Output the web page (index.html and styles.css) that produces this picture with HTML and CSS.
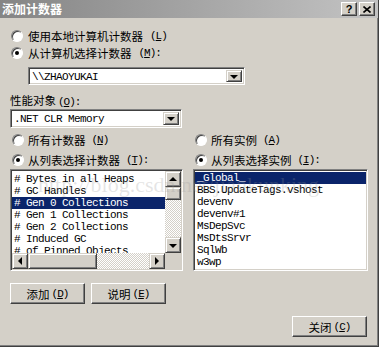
FILE: index.html
```html
<!DOCTYPE html>
<html lang="zh-CN">
<head>
    <meta charset="UTF-8">
    <meta name="viewport" content="width=device-width, initial-scale=1.0">
    <title>添加计数器</title>
    <link rel="stylesheet" href="styles.css">
</head>
<body>
    <div class="window">
        <div class="titlebar">
            <span class="title">添加计数器</span>
            <div class="caption-buttons">
                <span class="cap-btn">?</span>
                <span class="cap-btn">
                    <svg width="8" height="7" viewBox="0 0 8 7"><path d="M0.5 0.5 L7.5 6.5 M7.5 0.5 L0.5 6.5" stroke="#000" stroke-width="1.6"/></svg>
                </span>
            </div>
        </div>

        <div class="content">
            <div class="radio-row top"><span class="radio"></span>使用本地计算机计数器<span class="key">(<u>L</u>)</span></div>
            <div class="radio-row top"><span class="radio checked"></span>从计算机选择计数器<span class="key">(<u>M</u>):</span></div>
            <div class="combo machine">
                <span class="combo-text">\\ZHAOYUKAI</span>
                <span class="combo-btn"><i class="tri-down"></i></span>
            </div>

            <div class="label">性能对象<span class="key">(<u>O</u>):</span></div>
            <div class="combo object">
                <span class="combo-text">.NET CLR Memory</span>
                <span class="combo-btn"><i class="tri-down"></i></span>
            </div>

            <div class="columns">
                <div class="col">
                    <div class="radio-row"><span class="radio"></span>所有计数器<span class="key">(<u>N</u>)</span></div>
                    <div class="radio-row second"><span class="radio checked"></span>从列表选择计数器<span class="key">(<u>T</u>):</span></div>
                    <div class="listbox scrolled">
                        <div class="items">
                            <div class="item"># Bytes in all Heaps</div>
                            <div class="item"># GC Handles</div>
                            <div class="item selected"># Gen 0 Collections</div>
                            <div class="item"># Gen 1 Collections</div>
                            <div class="item"># Gen 2 Collections</div>
                            <div class="item"># Induced GC</div>
                            <div class="item"># of Pinned Objects</div>
                        </div>
                        <div class="vscroll">
                            <span class="sb-btn"><i class="tri-up"></i></span>
                            <span class="thumb v"></span>
                            <span class="track"></span>
                            <span class="sb-btn"><i class="tri-down"></i></span>
                        </div>
                        <div class="hscroll">
                            <span class="sb-btn"><i class="tri-left"></i></span>
                            <span class="thumb h"></span>
                            <span class="track"></span>
                            <span class="sb-btn"><i class="tri-right"></i></span>
                        </div>
                        <div class="corner"></div>
                    </div>
                </div>

                <div class="col">
                    <div class="radio-row"><span class="radio"></span>所有实例<span class="key">(<u>A</u>)</span></div>
                    <div class="radio-row second"><span class="radio checked"></span>从列表选择实例<span class="key">(<u>I</u>):</span></div>
                    <div class="listbox">
                        <div class="items instances">
                            <div class="item selected">_Global_</div>
                            <div class="item">BBS.UpdateTags.vshost</div>
                            <div class="item">devenv</div>
                            <div class="item">devenv#1</div>
                            <div class="item">MsDepSvc</div>
                            <div class="item">MsDtsSrvr</div>
                            <div class="item">SqlWb</div>
                            <div class="item">w3wp</div>
                        </div>
                    </div>
                </div>
            </div>

            <div class="buttons">
                <span class="btn">添加<span class="key">(<u>D</u>)</span></span>
                <span class="btn">说明<span class="key">(<u>E</u>)</span></span>
            </div>
            <div class="footer">
                <span class="btn">关闭<span class="key">(<u>C</u>)</span></span>
            </div>
        </div>

        <div class="watermark">http://blog.csdn.net/jiankunking</div>
    </div>
    <div class="behind"></div>
</body>
</html>
```

FILE: styles.css
```css
* {
    box-sizing: border-box;
}
body {
    margin: 0;
    width: 380px;
    height: 350px;
    overflow: hidden;
    background-color: #fff;
    font-family: "Noto Sans CJK SC", sans-serif;
    font-size: 11.5px;
    color: #000;
}
u {
    text-decoration-thickness: 1px;
    text-underline-offset: 1px;
}
.key {
    font-family: "Liberation Mono", monospace;
    font-size: 11px;
    letter-spacing: -1px;
    margin-left: 2px;
}
.window {
    position: relative;
    width: 379px;
    height: 347px;
    background-color: #d4d0c8;
    border-right: 1px solid #404040;
    border-bottom: 1px solid #404040;
    box-shadow: inset -1px -1px #808080;
}

/* title bar */
.titlebar {
    height: 18px;
    display: flex;
    align-items: center;
    justify-content: space-between;
    padding: 0 3px 0 2px;
    background: linear-gradient(to right, #858585, #c3c3c3);
}
.title {
    color: #fff;
    font-weight: bold;
    font-size: 12px;
    line-height: 18px;
}
.caption-buttons {
    display: flex;
    gap: 2px;
}
.cap-btn {
    width: 16px;
    height: 14px;
    display: flex;
    align-items: center;
    justify-content: center;
    background-color: #d4d0c8;
    border: 1px solid;
    border-color: #fff #404040 #404040 #fff;
    box-shadow: inset -1px -1px #808080;
    font: bold 11px "Liberation Sans", sans-serif;
}

/* main area */
.content {
    padding: 9px 11px 0 10px;
}
.radio-row {
    display: flex;
    align-items: center;
    height: 17px;
    gap: 4px;
    white-space: nowrap;
}
.radio-row.top {
    gap: 5px;
}
.radio-row.second {
    margin-top: 4px;
    height: 16px;
}
.radio {
    position: relative;
    flex: none;
    width: 12px;
    height: 12px;
    margin-left: 2px;
    border-radius: 50%;
    background-color: #fff;
    border: 1px solid;
    border-color: #808080 #fff #fff #808080;
    box-shadow: inset 1px 1px #404040;
}
.radio-row.top .radio {
    margin-left: 1px;
}
.radio.checked::after {
    content: "";
    position: absolute;
    left: 3px;
    top: 3px;
    width: 4px;
    height: 4px;
    border-radius: 50%;
    background-color: #000;
}
.label {
    margin-top: 7px;
    height: 16px;
    line-height: 16px;
}

/* combo boxes */
.combo {
    display: flex;
    align-items: stretch;
    height: 18px;
    padding: 2px;
    background-color: #fff;
    border: 1px solid;
    border-color: #808080 #fff #fff #808080;
    box-shadow: inset 1px 1px #404040, inset -1px -1px #d4d0c8;
}
.combo.machine {
    margin-top: 6px;
    margin-left: 18px;
    width: 217px;
}
.combo.object {
    margin-top: 1px;
    width: 172px;
    height: 19px;
}
.combo-text {
    flex: 1;
    padding-left: 1px;
    font-family: "Liberation Mono", monospace;
    font-size: 11px;
    letter-spacing: -0.6px;
    line-height: 14px;
    white-space: nowrap;
}
.combo-btn,
.sb-btn,
.thumb {
    display: flex;
    align-items: center;
    justify-content: center;
    background-color: #d4d0c8;
    border: 1px solid;
    border-color: #d4d0c8 #404040 #404040 #d4d0c8;
    box-shadow: inset 1px 1px #fff, inset -1px -1px #808080;
}
.combo-btn {
    width: 16px;
}

/* arrows */
.tri-down, .tri-up, .tri-left, .tri-right {
    width: 0;
    height: 0;
    border: 4px solid transparent;
}
.tri-down {
    border-top-color: #000;
    border-bottom-width: 0;
    margin-top: 1px;
}
.tri-up {
    border-bottom-color: #000;
    border-top-width: 0;
    margin-bottom: 1px;
}
.tri-left {
    border-right-color: #000;
    border-left-width: 0;
}
.tri-right {
    border-left-color: #000;
    border-right-width: 0;
}

/* counter / instance columns */
.columns {
    display: grid;
    grid-template-columns: 173px 175px;
    column-gap: 10px;
    margin-top: 3px;
}
.listbox {
    height: 102px;
    margin-top: 1px;
    padding: 1px;
    overflow: hidden;
    background-color: #fff;
    border: 1px solid;
    border-color: #808080 #fff #fff #808080;
    box-shadow: inset 1px 1px #404040, inset -1px -1px #d4d0c8;
}
.listbox.scrolled {
    display: grid;
    grid-template-columns: 1fr 16px;
    grid-template-rows: 1fr 16px;
}
.items {
    overflow: hidden;
    padding-top: 2px;
    font-family: "Liberation Mono", monospace;
    font-size: 11px;
    letter-spacing: -0.6px;
}
.items.instances {
    padding-top: 1px;
}
.item {
    height: 12px;
    line-height: 12px;
    padding-left: 2px;
    white-space: nowrap;
}
.item.selected {
    background-color: #0a246a;
    color: #fff;
}
.vscroll {
    display: flex;
    flex-direction: column;
}
.hscroll {
    display: flex;
}
.sb-btn {
    flex: none;
    width: 16px;
    height: 16px;
}
.thumb.v {
    height: 13px;
}
.thumb.h {
    width: 69px;
}
.track {
    flex: 1;
    background: repeating-conic-gradient(#d4d0c8 0 25%, #fff 0 50%) 0 0 / 2px 2px;
}
.corner {
    background-color: #d4d0c8;
}

/* push buttons */
.buttons {
    display: flex;
    gap: 6px;
    margin-top: 12px;
}
.footer {
    display: flex;
    justify-content: flex-end;
    margin-top: 12px;
}
.btn {
    width: 75px;
    height: 21px;
    display: flex;
    align-items: center;
    justify-content: center;
    background-color: #d4d0c8;
    border: 1px solid;
    border-color: #fff #404040 #404040 #fff;
    box-shadow: inset -1px -1px #808080;
    line-height: 16px;
}

.watermark {
    position: absolute;
    left: 38px;
    top: 172px;
    font-family: "Liberation Serif", serif;
    font-size: 22px;
    color: rgba(150, 150, 150, 0.25);
    white-space: nowrap;
    pointer-events: none;
}
.behind {
    height: 3px;
    background-color: #fff;
}
```
